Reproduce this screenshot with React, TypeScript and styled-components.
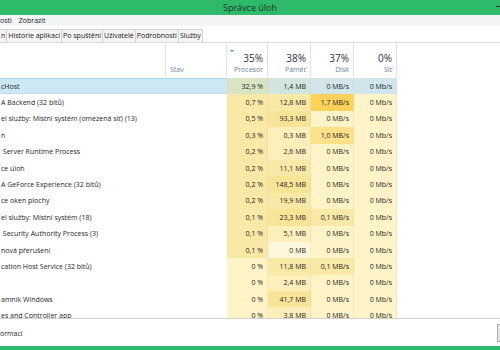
import styled, { createGlobalStyle } from "styled-components";

const GlobalStyle = createGlobalStyle`
    html, body {
        margin: 0;
        padding: 0;
        background: #ffffff;
    }
    body {
        font-family: "Open Sans", "Noto Sans", sans-serif;
        color: #1e1e1e;
    }
`;

const GREEN = "#2fb96a";
const COLS = "166px 61px 41px 43px 43px 43px 1fr";

type Row = {
    name: string;
    cpu: string;
    mem: string;
    disk: string;
    net: string;
    cpuBg: string;
    memBg: string;
    diskBg: string;
    selected?: boolean;
};

const Y0 = "#fff4c8";
const Y1 = "#fcefba";
const Y2 = "#f9e9a6";
const Y3 = "#f7e497";

const rows: Row[] = [
    {name: "cHost", cpu: "32,9 %", mem: "1,4 MB", disk: "0 MB/s", net: "0 Mb/s", cpuBg: "#d8e4c4", memBg: "#d2e5dc", diskBg: "#d0e6e9", selected: true},
    {name: "A Backend (32 bitů)", cpu: "0,7 %", mem: "12,8 MB", disk: "1,7 MB/s", net: "0 Mb/s", cpuBg: Y2, memBg: Y2, diskBg: "#fdd25a"},
    {name: "el služby: Místní systém (omezená síť) (13)", cpu: "0,5 %", mem: "93,3 MB", disk: "0 MB/s", net: "0 Mb/s", cpuBg: Y2, memBg: Y3, diskBg: Y0},
    {name: "n", cpu: "0,3 %", mem: "0,3 MB", disk: "1,0 MB/s", net: "0 Mb/s", cpuBg: Y2, memBg: Y1, diskBg: "#fde08a"},
    {name: " Server Runtime Process", cpu: "0,2 %", mem: "2,6 MB", disk: "0 MB/s", net: "0 Mb/s", cpuBg: Y2, memBg: Y1, diskBg: Y0},
    {name: "ce úloh", cpu: "0,2 %", mem: "11,1 MB", disk: "0 MB/s", net: "0 Mb/s", cpuBg: Y2, memBg: Y2, diskBg: Y0},
    {name: "A GeForce Experience (32 bitů)", cpu: "0,2 %", mem: "148,5 MB", disk: "0 MB/s", net: "0 Mb/s", cpuBg: Y2, memBg: Y3, diskBg: Y0},
    {name: "ce oken plochy", cpu: "0,2 %", mem: "19,9 MB", disk: "0 MB/s", net: "0 Mb/s", cpuBg: Y2, memBg: Y2, diskBg: Y0},
    {name: "el služby: Místní systém (18)", cpu: "0,1 %", mem: "23,3 MB", disk: "0,1 MB/s", net: "0 Mb/s", cpuBg: Y2, memBg: Y3, diskBg: Y2},
    {name: " Security Authority Process (3)", cpu: "0,1 %", mem: "5,1 MB", disk: "0 MB/s", net: "0 Mb/s", cpuBg: Y2, memBg: Y1, diskBg: Y0},
    {name: "nová přerušení", cpu: "0,1 %", mem: "0 MB", disk: "0 MB/s", net: "0 Mb/s", cpuBg: Y2, memBg: "#fff7dc", diskBg: Y0},
    {name: "cation Host Service (32 bitů)", cpu: "0 %", mem: "11,8 MB", disk: "0,1 MB/s", net: "0 Mb/s", cpuBg: Y0, memBg: Y2, diskBg: Y2},
    {name: "", cpu: "0 %", mem: "2,4 MB", disk: "0 MB/s", net: "0 Mb/s", cpuBg: Y0, memBg: Y1, diskBg: Y0},
    {name: "amník Windows", cpu: "0 %", mem: "41,7 MB", disk: "0 MB/s", net: "0 Mb/s", cpuBg: Y0, memBg: Y3, diskBg: Y0},
    {name: "es and Controller app", cpu: "0 %", mem: "3,8 MB", disk: "0 MB/s", net: "0 Mb/s", cpuBg: Y0, memBg: Y1, diskBg: Y0},
];

const tabs = ["n", "Historie aplikací", "Po spuštění", "Uživatelé", "Podrobnosti", "Služby"];

const metrics = [
    {pct: "35%", label: "Procesor", sorted: true},
    {pct: "38%", label: "Paměť"},
    {pct: "37%", label: "Disk"},
    {pct: "0%", label: "Síť"},
];

export default function App() {
    return (
        <>
            <GlobalStyle/>
            <Window>
                <TitleBar>
                    <span/>
                    <Title>Správce úloh</Title>
                    <Controls><Minimize/></Controls>
                </TitleBar>
                <MenuBar>
                    <MenuItem>osti</MenuItem>
                    <MenuItem>Zobrazit</MenuItem>
                </MenuBar>
                <TabStrip>
                    {tabs.map((t, i) => (
                        <Tab key={t} $first={i === 0}>{t}</Tab>
                    ))}
                </TabStrip>
                <Header>
                    <HeadCell/>
                    <HeadCell><HeadLabel>Stav</HeadLabel></HeadCell>
                    {metrics.map(m => (
                        <MetricHead key={m.label}>
                            {m.sorted && <SortArrow/>}
                            <Pct>{m.pct}</Pct>
                            <HeadLabel>{m.label}</HeadLabel>
                        </MetricHead>
                    ))}
                    <HeadFill/>
                </Header>
                <List>
                    {rows.map((r, i) => (
                        <RowLine key={i} $selected={r.selected}>
                            <NameCell>{r.name}</NameCell>
                            <StatusCell/>
                            <ValueCell $bg={r.cpuBg}>{r.cpu}</ValueCell>
                            <ValueCell $bg={r.memBg}>{r.mem}</ValueCell>
                            <ValueCell $bg={r.diskBg}>{r.disk}</ValueCell>
                            <ValueCell $bg={r.selected ? "#d0e6ec" : Y0}>{r.net}</ValueCell>
                            <span/>
                        </RowLine>
                    ))}
                </List>
                <Footer>
                    <MoreLink>ormací</MoreLink>
                    <EndButton aria-label="Ukončit úlohu"/>
                </Footer>
                <BottomEdge/>
            </Window>
        </>
    );
}

const Window = styled.div`
    width: 500px;
    height: 350px;
    display: flex;
    flex-direction: column;
    overflow: hidden;
    background: #ffffff;
`;

const TitleBar = styled.div`
    height: 15px;
    flex-shrink: 0;
    background: ${GREEN};
    display: grid;
    grid-template-columns: 1fr auto 1fr;
    align-items: center;
`;

const Title = styled.span`
    font-size: 9px;
    color: #1d3326;
    line-height: 15px;
`;

const Controls = styled.div`
    display: flex;
    justify-content: flex-end;
`;

const Minimize = styled.span`
    width: 4px;
    height: 1px;
    background: #1d3326;
    margin-bottom: 3px;
`;

const MenuBar = styled.div`
    height: 11px;
    flex-shrink: 0;
    background: #f3f4f6;
    display: flex;
    align-items: center;
    gap: 7px;
`;

const MenuItem = styled.span`
    font-size: 7px;
    color: #222;
    line-height: 11px;
`;

const TabStrip = styled.div`
    height: 17px;
    flex-shrink: 0;
    display: flex;
    align-items: flex-end;
    border-bottom: 1px solid #dcdcdc;
    box-sizing: border-box;
`;

const Tab = styled.div<{ $first?: boolean }>`
    height: 13px;
    box-sizing: border-box;
    padding: 0 ${p => (p.$first ? "1px" : "1px")};
    border: 1px solid #d2d2d2;
    border-bottom: none;
    border-left: ${p => (p.$first ? "none" : "1px solid #d2d2d2")};
    margin-right: -1px;
    background: #f4f4f4;
    font-size: 7px;
    line-height: 12px;
    color: #222;
    white-space: nowrap;
`;

const Header = styled.div`
    height: 34px;
    flex-shrink: 0;
    display: grid;
    grid-template-columns: ${COLS};
`;

const HeadCell = styled.div`
    border-right: 1px solid #e2e2e2;
    display: flex;
    align-items: flex-end;
    padding: 0 0 2px 4px;
`;

const HeadFill = styled.div``;

const MetricHead = styled.div`
    position: relative;
    border-right: 1px solid #e2e2e2;
    display: flex;
    flex-direction: column;
    align-items: flex-end;
    justify-content: flex-end;
    padding: 0 4px 2px 0;
`;

const SortArrow = styled.span`
    position: absolute;
    left: 3px;
    top: 7px;
    width: 0;
    height: 0;
    border-left: 2px solid transparent;
    border-right: 2px solid transparent;
    border-top: 2px solid #3d8fd1;
`;

const Pct = styled.span`
    font-size: 10px;
    color: #2b3340;
    line-height: 13px;
`;

const HeadLabel = styled.span`
    font-size: 7px;
    color: #6b7f9d;
    line-height: 10px;
`;

const List = styled.div`
    flex: 1;
    overflow: hidden;
    padding-top: 1px;
`;

const RowLine = styled.div<{ $selected?: boolean }>`
    display: grid;
    grid-template-columns: ${COLS};
    height: 16.4px;
    align-items: stretch;
    background: ${p => (p.$selected ? "#cce8f5" : "transparent")};
    box-shadow: ${p => (p.$selected ? "inset 0 1px 0 #a9d6ef, inset 0 -1px 0 #bfe0f2" : "none")};
    font-size: 7px;

    & > span:last-child {
        background: #ffffff;
    }
`;

const NameCell = styled.div`
    display: flex;
    align-items: center;
    padding-left: 1px;
    white-space: pre;
    color: #1e1e1e;
`;

const StatusCell = styled.div``;

const ValueCell = styled.div<{ $bg: string }>`
    display: flex;
    align-items: center;
    justify-content: flex-end;
    padding-right: 4px;
    background: ${p => p.$bg};
    border-right: 1px solid rgba(220, 200, 140, 0.25);
    color: #1e1e1e;
    white-space: nowrap;
`;

const Footer = styled.div`
    height: 28px;
    flex-shrink: 0;
    border-top: 1px solid #d0d0d0;
    box-sizing: border-box;
    display: flex;
    align-items: center;
    justify-content: space-between;
    overflow: hidden;
`;

const MoreLink = styled.span`
    font-size: 7px;
    color: #222;
    margin-top: 1px;
`;

const EndButton = styled.button`
    flex-shrink: 0;
    width: 60px;
    height: 18px;
    margin-right: -57px;
    border: 1px solid #adadad;
    background: #e6e6e6;
    padding: 0;
`;

const BottomEdge = styled.div`
    height: 4px;
    flex-shrink: 0;
    background: ${GREEN};
`;
